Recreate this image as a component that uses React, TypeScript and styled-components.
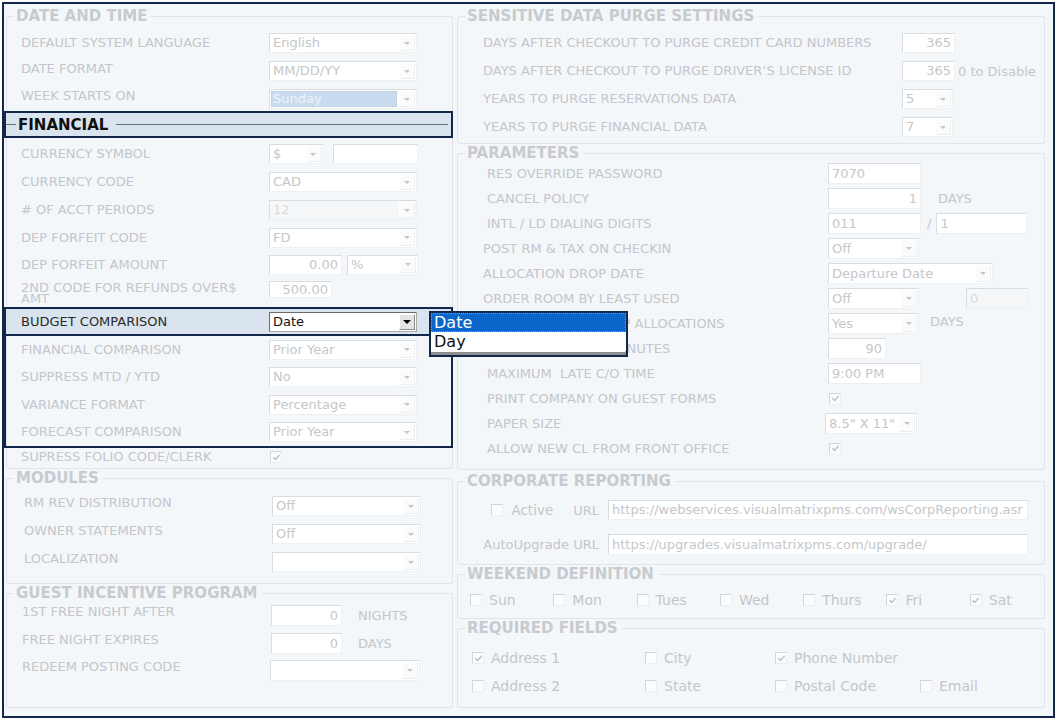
import React from "react";
import styled, { createGlobalStyle, css } from "styled-components";

const NAVY = "#12274a";
const PAGE = "#f4f7fa";
const LINE = "#e0e5eb";
const LABEL = "#c3c6ca";
const LEGEND = "#c7cbcf";
const VALUE = "#c4c7ca";
const HL = "#d9e4ef";

const Global = createGlobalStyle`
  *, *::before, *::after { box-sizing: border-box; }
  html, body { margin: 0; padding: 0; background: #ffffff; }
  body { font-family: "DejaVu Sans", Verdana, sans-serif; font-size: 13px; }
`;

const Frame = styled.div`
  margin: 2px 0 0 2px;
  width: 1053px;
  height: 716px;
  border: 2px solid ${NAVY};
  background: ${PAGE};
  display: grid;
  grid-template-columns: 450px 1fr;
  column-gap: 2px;
`;

const Column = styled.div<{ $pl: number; $pr: number }>`
  display: flex;
  flex-direction: column;
  min-width: 0;
  padding: 4px ${(p) => p.$pr}px 8px ${(p) => p.$pl}px;
`;

const Section = styled.section<{ $mb?: number; $grow?: boolean }>`
  display: flex;
  flex-direction: column;
  margin-bottom: ${(p) => p.$mb ?? 1}px;
  ${(p) => p.$grow && css`flex: 1;`}
`;

const Head = styled.div`
  display: flex;
  height: 16px;
  align-items: stretch;
`;

const Lead = styled.div`
  width: 8px;
  margin-top: 8px;
  border-top: 1px solid ${LINE};
  border-left: 1px solid ${LINE};
  border-top-left-radius: 3px;
`;

const Title = styled.div`
  padding: 0 4px 0 2px;
  font-weight: bold;
  font-size: 15px;
  line-height: 16px;
  color: ${LEGEND};
  white-space: nowrap;
`;

const Rule = styled.div`
  flex: 1;
  margin-top: 8px;
  border-top: 1px solid ${LINE};
  border-right: 1px solid ${LINE};
  border-top-right-radius: 3px;
`;

const HlHead = styled.div`
  display: flex;
  align-items: center;
  height: 27px;
  margin: -2px 0 0 -2px;
  border: 2px solid ${NAVY};
  background: ${HL};
`;

const HlLead = styled.div`
  width: 10px;
  border-top: 1px solid #66737f;
`;

const HlTitle = styled.div`
  padding: 0 8px 0 2px;
  font-weight: bold;
  font-size: 15px;
  line-height: 16px;
  color: #101010;
`;

const HlRule = styled.div`
  flex: 1;
  margin-right: 3px;
  border-top: 1px solid #66737f;
`;

const Body = styled.div<{ $pt: number; $pb: number; $open?: boolean; $grow?: boolean }>`
  display: flex;
  flex-direction: column;
  border: 1px solid ${LINE};
  border-top: none;
  border-radius: 0 0 3px 3px;
  padding: ${(p) => p.$pt}px 0 ${(p) => p.$pb}px 0;
  ${(p) => p.$open && css`border-bottom: none; border-radius: 0;`}
  ${(p) => p.$grow && css`flex: 1;`}
`;

const Row = styled.div<{ $h: number; $cols: string; $pl: number }>`
  display: grid;
  grid-template-columns: ${(p) => p.$cols};
  align-items: center;
  height: ${(p) => p.$h}px;
  padding-left: ${(p) => p.$pl}px;
`;

const BudgetRow = styled(Row)`
  background: ${HL};
  border-bottom: 2px solid ${NAVY};
`;

const HlGroup = styled.div`
  margin: 0 -1px 0 -3px;
  border: 2px solid ${NAVY};
`;

const Label = styled.div<{ $dark?: boolean; $indent?: number; $top?: number; $lh?: number }>`
  color: ${(p) => (p.$dark ? "#2a2a2a" : LABEL)};
  font-size: 13px;
  line-height: ${(p) => p.$lh ?? 16}px;
  padding-left: ${(p) => p.$indent ?? 0}px;
  white-space: pre;
  ${(p) =>
    p.$top !== undefined &&
    css`
      align-self: start;
      padding-top: ${p.$top}px;
    `}
`;

const Controls = styled.div<{ $top?: number }>`
  display: flex;
  align-items: center;
  ${(p) =>
    p.$top !== undefined &&
    css`
      align-self: start;
      margin-top: ${p.$top}px;
    `}
`;

const Anchor = styled.div`
  position: relative;
  display: flex;
`;

type Tone = "idle" | "active" | "picked" | "off";

const Field = styled.div<{ $w: number; $h: number; $tone: Tone; $ml: number }>`
  display: flex;
  flex: none;
  width: ${(p) => p.$w}px;
  height: ${(p) => p.$h}px;
  margin-left: ${(p) => p.$ml}px;
  border: 1px solid;
  border-color: ${(p) =>
    p.$tone === "active" ? "#6c6c6c #a9a9a9 #a9a9a9 #6c6c6c" : "#d9dce0 #eef0f2 #eef0f2 #d9dce0"};
  background: ${(p) => (p.$tone === "off" ? "#f6f7f9" : "#ffffff")};
  font-size: 13px;
  line-height: ${(p) => p.$h - 2}px;
  color: ${(p) => (p.$tone === "active" ? "#111111" : p.$tone === "off" ? "#d8dadd" : VALUE)};
`;

const FieldText = styled.span<{ $right?: boolean; $picked?: boolean; $tight?: boolean }>`
  flex: 1;
  min-width: 0;
  overflow: hidden;
  white-space: nowrap;
  padding: 0 ${(p) => (p.$tight ? 0 : 3)}px 0 3px;
  text-align: ${(p) => (p.$right ? "right" : "left")};
  ${(p) =>
    p.$picked &&
    css`
      margin: 1px;
      padding: 0 2px;
      line-height: 16px;
      background: #c9dbef;
      color: #eef4fa;
      outline: 1px dotted #b7c8db;
      outline-offset: -1px;
    `}
`;

const Arrow = styled.span<{ $active?: boolean }>`
  flex: none;
  width: 16px;
  margin: 1px;
  display: flex;
  align-items: center;
  justify-content: center;
  border: 1px solid;
  border-color: ${(p) => (p.$active ? "#ffffff #8a8a8a #8a8a8a #ffffff" : "#ffffff #eceef0 #eceef0 #ffffff")};
  background: ${(p) => (p.$active ? "#e4e4e4" : "#fafbfb")};
  &::after {
    content: "";
    border-left: ${(p) => (p.$active ? 4 : 3)}px solid transparent;
    border-right: ${(p) => (p.$active ? 4 : 3)}px solid transparent;
    border-top: ${(p) => (p.$active ? 4 : 3)}px solid ${(p) => (p.$active ? "#000000" : "#c3c7cb")};
  }
`;

const Unit = styled.span<{ $ml: number; $up?: number }>`
  margin-left: ${(p) => p.$ml}px;
  margin-bottom: ${(p) => (p.$up ?? 0) * 2}px;
  color: ${LABEL};
  font-size: 13px;
  white-space: nowrap;
`;

const Popup = styled.div`
  position: absolute;
  left: 160px;
  top: -1px;
  width: 199px;
  z-index: 5;
  border: 2px solid ${NAVY};
  background: #ffffff;
  padding-bottom: 4px;
  box-shadow: inset 0 -3px 0 #8e8e8e, inset -1px 0 0 #b0b0b0;
`;

const Option = styled.div<{ $on?: boolean }>`
  height: 19px;
  line-height: 19px;
  padding-left: 3px;
  font-size: 16px;
  color: ${(p) => (p.$on ? "#ffffff" : "#111111")};
  background: ${(p) => (p.$on ? "#0b66cc" : "#ffffff")};
  ${(p) =>
    p.$on &&
    css`
      outline: 1px dotted #e0853a;
      outline-offset: -1px;
    `}
`;

const Box = styled.span<{ $ml?: number }>`
  flex: none;
  width: 12px;
  height: 12px;
  margin-left: ${(p) => p.$ml ?? 0}px;
  border: 1px solid;
  border-color: #d2d6da #eceef0 #eceef0 #d2d6da;
  background: #fbfcfd;
  display: inline-flex;
  align-items: center;
  justify-content: center;
`;

const CheckItem = styled.div<{ $size?: number }>`
  display: flex;
  align-items: center;
  gap: 7px;
  font-size: ${(p) => p.$size ?? 14}px;
  color: ${LABEL};
  white-space: nowrap;
`;

const CorpLabel = styled.div`
  display: flex;
  align-items: center;
  justify-content: flex-end;
  padding-right: 9px;
  color: ${LABEL};
  white-space: nowrap;
`;

const CorpText = styled.span<{ $ml?: number; $size?: number }>`
  margin-left: ${(p) => p.$ml ?? 0}px;
  font-size: ${(p) => p.$size ?? 13}px;
`;

const WeekRow = styled.div`
  display: grid;
  grid-template-columns: repeat(7, 83.3px);
  align-items: center;
  height: 28px;
  padding-left: 12px;
`;

const ReqRow = styled.div`
  display: grid;
  grid-template-columns: 173px 130px 145px 1fr;
  align-items: center;
  height: 28px;
  padding-left: 14px;
`;

function Check({ on, ml }: { on?: boolean; ml?: number }) {
  return (
    <Box $ml={ml}>
      {on && (
        <svg width="9" height="9" viewBox="0 0 9 9">
          <path d="M1.5 4.2 L3.6 6.6 L7.6 1.8" fill="none" stroke="#b5b9bd" strokeWidth="1.3" />
        </svg>
      )}
    </Box>
  );
}

function Select({ w, h = 20, v = "", tone = "idle", ml = 0 }: { w: number; h?: number; v?: string; tone?: Tone; ml?: number }) {
  return (
    <Field $w={w} $h={h} $tone={tone} $ml={ml}>
      <FieldText $picked={tone === "picked"}>{v}</FieldText>
      <Arrow $active={tone === "active"} />
    </Field>
  );
}

function TextBox({ w, h = 20, v = "", right, tone = "idle", ml = 0, tight }: { w: number; h?: number; v?: string; right?: boolean; tone?: Tone; ml?: number; tight?: boolean }) {
  return (
    <Field $w={w} $h={h} $tone={tone} $ml={ml}>
      <FieldText $right={right} $tight={tight}>{v}</FieldText>
    </Field>
  );
}

const L = "248px 1fr";
const P = "345px 1fr";

export default function App() {
  return (
    <>
      <Global />
      <Frame>
        <Column $pl={2} $pr={1}>
          <Section $mb={0}>
            <Head>
              <Lead />
              <Title>DATE AND TIME</Title>
              <Rule />
            </Head>
            <Body $pt={5} $pb={0} $open>
              <Row $h={28} $pl={14} $cols={L}>
                <Label>DEFAULT SYSTEM LANGUAGE</Label>
                <Controls><Select w={148} v="English" /></Controls>
              </Row>
              <Row $h={28} $pl={14} $cols={L}>
                <Label $top={4}>DATE FORMAT</Label>
                <Controls><Select w={148} v="MM/DD/YY" /></Controls>
              </Row>
              <Row $h={28} $pl={14} $cols={L}>
                <Label $top={3}>WEEK STARTS ON</Label>
                <Controls><Select w={148} v="Sunday" tone="picked" /></Controls>
              </Row>
            </Body>
          </Section>

          <Section>
            <HlHead>
              <HlLead />
              <HlTitle>FINANCIAL</HlTitle>
              <HlRule />
            </HlHead>
            <Body $pt={2} $pb={2}>
              <Row $h={28} $pl={14} $cols={L}>
                <Label>CURRENCY SYMBOL</Label>
                <Controls>
                  <Select w={54} v="$" />
                  <TextBox w={85} ml={10} />
                </Controls>
              </Row>
              <Row $h={28} $pl={14} $cols={L}>
                <Label>CURRENCY CODE</Label>
                <Controls><Select w={148} v="CAD" /></Controls>
              </Row>
              <Row $h={28} $pl={14} $cols={L}>
                <Label># OF ACCT PERIODS</Label>
                <Controls><Select w={148} v="12" tone="off" /></Controls>
              </Row>
              <Row $h={27} $pl={14} $cols={L}>
                <Label>DEP FORFEIT CODE</Label>
                <Controls><Select w={148} v="FD" /></Controls>
              </Row>
              <Row $h={27} $pl={14} $cols={L}>
                <Label>DEP FORFEIT AMOUNT</Label>
                <Controls>
                  <TextBox w={73} v="0.00" right />
                  <Select w={71} v="%" ml={5} />
                </Controls>
              </Row>
              <Row $h={29} $pl={14} $cols={L}>
                <Label $top={4} $lh={11}>{"2ND CODE FOR REFUNDS OVER$\nAMT"}</Label>
                <Controls $top={3}><TextBox w={63} h={17} v="500.00" right /></Controls>
              </Row>

              <HlGroup>
                <BudgetRow $h={27} $pl={15} $cols={L}>
                  <Label $dark>BUDGET COMPARISON</Label>
                  <Controls>
                    <Anchor>
                      <Select w={148} v="Date" tone="active" />
                      <Popup>
                        <Option $on>Date</Option>
                        <Option>Day</Option>
                      </Popup>
                    </Anchor>
                  </Controls>
                </BudgetRow>
                <Row $h={27.5} $pl={15} $cols={L}>
                  <Label>FINANCIAL COMPARISON</Label>
                  <Controls><Select w={148} v="Prior Year" /></Controls>
                </Row>
                <Row $h={27.5} $pl={15} $cols={L}>
                  <Label>SUPPRESS MTD / YTD</Label>
                  <Controls><Select w={148} v="No" /></Controls>
                </Row>
                <Row $h={27.5} $pl={15} $cols={L}>
                  <Label>VARIANCE FORMAT</Label>
                  <Controls><Select w={148} v="Percentage" /></Controls>
                </Row>
                <Row $h={27.5} $pl={15} $cols={L}>
                  <Label>FORECAST COMPARISON</Label>
                  <Controls><Select w={148} v="Prior Year" /></Controls>
                </Row>
              </HlGroup>

              <Row $h={18} $pl={14} $cols={L}>
                <Label>SUPRESS FOLIO CODE/CLERK</Label>
                <Controls><Check on ml={1} /></Controls>
              </Row>
            </Body>
          </Section>

          <Section>
            <Head>
              <Lead />
              <Title>MODULES</Title>
              <Rule />
            </Head>
            <Body $pt={6} $pb={7}>
              <Row $h={28} $pl={17} $cols={L}>
                <Label $top={3}>RM REV DISTRIBUTION</Label>
                <Controls><Select w={149} v="Off" /></Controls>
              </Row>
              <Row $h={28} $pl={17} $cols={L}>
                <Label $top={3}>OWNER STATEMENTS</Label>
                <Controls><Select w={149} v="Off" /></Controls>
              </Row>
              <Row $h={28} $pl={17} $cols={L}>
                <Label $top={3}>LOCALIZATION</Label>
                <Controls><Select w={149} /></Controls>
              </Row>
            </Body>
          </Section>

          <Section $grow $mb={0}>
            <Head>
              <Lead />
              <Title>GUEST INCENTIVE PROGRAM</Title>
              <Rule />
            </Head>
            <Body $pt={1} $pb={0} $grow>
              <Row $h={27.5} $pl={15} $cols="249px 1fr">
                <Label $top={2}>1ST FREE NIGHT AFTER</Label>
                <Controls>
                  <TextBox w={71} h={21} v="0" right />
                  <Unit $ml={16}>NIGHTS</Unit>
                </Controls>
              </Row>
              <Row $h={27.5} $pl={15} $cols="249px 1fr">
                <Label $top={2}>FREE NIGHT EXPIRES</Label>
                <Controls>
                  <TextBox w={71} h={21} v="0" right />
                  <Unit $ml={16}>DAYS</Unit>
                </Controls>
              </Row>
              <Row $h={27.5} $pl={15} $cols="249px 1fr">
                <Label $top={2}>REDEEM POSTING CODE</Label>
                <Controls><Select w={150} h={21} ml={-1} /></Controls>
              </Row>
            </Body>
          </Section>
        </Column>

        <Column $pl={1} $pr={8}>
          <Section>
            <Head>
              <Lead />
              <Title>SENSITIVE DATA PURGE SETTINGS</Title>
              <Rule />
            </Head>
            <Body $pt={5} $pb={2}>
              <Row $h={28} $pl={25} $cols="419px 1fr">
                <Label>DAYS AFTER CHECKOUT TO PURGE CREDIT CARD NUMBERS</Label>
                <Controls><TextBox w={53} v="365" right /></Controls>
              </Row>
              <Row $h={28} $pl={25} $cols="419px 1fr">
                <Label>DAYS AFTER CHECKOUT TO PURGE DRIVER’S LICENSE ID</Label>
                <Controls>
                  <TextBox w={53} v="365" right />
                  <Unit $ml={3}>0 to Disable</Unit>
                </Controls>
              </Row>
              <Row $h={28} $pl={25} $cols="419px 1fr">
                <Label>YEARS TO PURGE RESERVATIONS DATA</Label>
                <Controls><Select w={51} v="5" /></Controls>
              </Row>
              <Row $h={28} $pl={25} $cols="419px 1fr">
                <Label>YEARS TO PURGE FINANCIAL DATA</Label>
                <Controls><Select w={51} v="7" /></Controls>
              </Row>
            </Body>
          </Section>

          <Section $mb={3}>
            <Head>
              <Lead />
              <Title>PARAMETERS</Title>
              <Rule />
            </Head>
            <Body $pt={0} $pb={8}>
              <Row $h={25} $pl={25} $cols={P}>
                <Label $indent={4}>RES OVERRIDE PASSWORD</Label>
                <Controls><TextBox w={93} h={21} v="7070" /></Controls>
              </Row>
              <Row $h={25} $pl={25} $cols={P}>
                <Label $indent={4}>CANCEL POLICY</Label>
                <Controls>
                  <TextBox w={93} h={21} v="1" right />
                  <Unit $ml={17}>DAYS</Unit>
                </Controls>
              </Row>
              <Row $h={25} $pl={25} $cols={P}>
                <Label $indent={4}>INTL / LD DIALING DIGITS</Label>
                <Controls>
                  <TextBox w={93} h={21} v="011" />
                  <Unit $ml={6}>/</Unit>
                  <TextBox w={91} h={21} v="1" ml={5} />
                </Controls>
              </Row>
              <Row $h={25} $pl={25} $cols={P}>
                <Label>POST RM &amp; TAX ON CHECKIN</Label>
                <Controls><Select w={91} h={21} v="Off" /></Controls>
              </Row>
              <Row $h={25} $pl={25} $cols={P}>
                <Label>ALLOCATION DROP DATE</Label>
                <Controls><Select w={165} h={21} v="Departure Date" /></Controls>
              </Row>
              <Row $h={25} $pl={25} $cols={P}>
                <Label>ORDER ROOM BY LEAST USED</Label>
                <Controls>
                  <Select w={91} h={21} v="Off" />
                  <TextBox w={62} h={21} v="0" tone="off" ml={47} />
                </Controls>
              </Row>
              <Row $h={25} $pl={25} $cols={P}>
                <Label>AUTOMATICALLY DROP ALLOCATIONS</Label>
                <Controls>
                  <Select w={91} h={21} v="Yes" />
                  <Unit $ml={11} $up={2}>DAYS</Unit>
                </Controls>
              </Row>
              <Row $h={25} $pl={25} $cols={P}>
                <Label $indent={4}>CHECKOUT GRACE MINUTES</Label>
                <Controls><TextBox w={58} h={21} v="90" right /></Controls>
              </Row>
              <Row $h={25} $pl={25} $cols={P}>
                <Label $indent={4}>{"MAXIMUM  LATE C/O TIME"}</Label>
                <Controls><TextBox w={93} h={21} v="9:00 PM" /></Controls>
              </Row>
              <Row $h={25} $pl={25} $cols={P}>
                <Label $indent={4}>PRINT COMPANY ON GUEST FORMS</Label>
                <Controls><Check on ml={1} /></Controls>
              </Row>
              <Row $h={25} $pl={25} $cols={P}>
                <Label $indent={4}>PAPER SIZE</Label>
                <Controls><Select w={92} h={21} v={'8.5" X 11"'} ml={-3} /></Controls>
              </Row>
              <Row $h={25} $pl={25} $cols={P}>
                <Label $indent={4}>ALLOW NEW CL FROM FRONT OFFICE</Label>
                <Controls><Check on ml={1} /></Controls>
              </Row>
            </Body>
          </Section>

          <Section>
            <Head>
              <Lead />
              <Title>CORPORATE REPORTING</Title>
              <Rule />
            </Head>
            <Body $pt={4} $pb={3}>
              <Row $h={34} $pl={8} $cols="142px 420px">
                <CorpLabel>
                  <Check />
                  <CorpText $ml={8} $size={13.5}>Active</CorpText>
                  <CorpText $ml={20}>URL</CorpText>
                </CorpLabel>
                <Controls>
                  <TextBox w={420} v="https://webservices.visualmatrixpms.com/wsCorpReporting.asr" tight />
                </Controls>
              </Row>
              <Row $h={34} $pl={8} $cols="142px 420px">
                <CorpLabel>
                  <CorpText>AutoUpgrade URL</CorpText>
                </CorpLabel>
                <Controls>
                  <TextBox w={420} h={21} v="https://upgrades.visualmatrixpms.com/upgrade/" />
                </Controls>
              </Row>
            </Body>
          </Section>

          <Section>
            <Head>
              <Lead />
              <Title>WEEKEND DEFINITION</Title>
              <Rule />
            </Head>
            <Body $pt={4} $pb={4}>
              <WeekRow>
                <CheckItem><Check />Sun</CheckItem>
                <CheckItem><Check />Mon</CheckItem>
                <CheckItem><Check />Tues</CheckItem>
                <CheckItem><Check />Wed</CheckItem>
                <CheckItem><Check />Thurs</CheckItem>
                <CheckItem><Check on />Fri</CheckItem>
                <CheckItem><Check on />Sat</CheckItem>
              </WeekRow>
            </Body>
          </Section>

          <Section $grow $mb={0}>
            <Head>
              <Lead />
              <Title>REQUIRED FIELDS</Title>
              <Rule />
            </Head>
            <Body $pt={8} $pb={0} $grow>
              <ReqRow>
                <CheckItem><Check on />Address 1</CheckItem>
                <CheckItem><Check />City</CheckItem>
                <CheckItem><Check on />Phone Number</CheckItem>
                <span />
              </ReqRow>
              <ReqRow>
                <CheckItem><Check />Address 2</CheckItem>
                <CheckItem><Check />State</CheckItem>
                <CheckItem><Check />Postal Code</CheckItem>
                <CheckItem><Check />Email</CheckItem>
              </ReqRow>
            </Body>
          </Section>
        </Column>
      </Frame>
    </>
  );
}
